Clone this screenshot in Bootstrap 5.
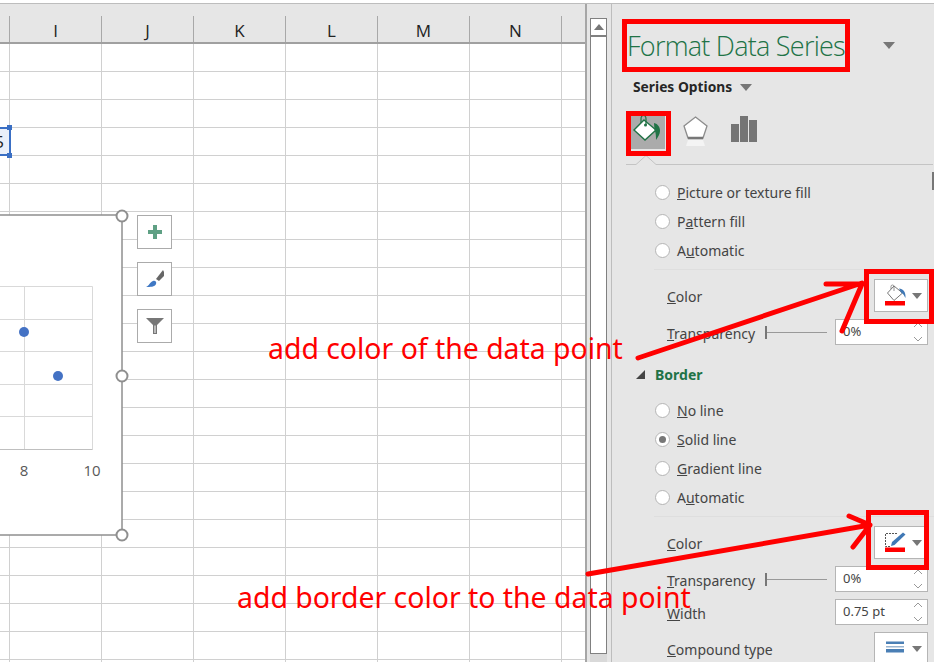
<!DOCTYPE html>
<html lang="en">
<head>
<meta charset="utf-8">
<title>Format Data Series</title>
<link rel="stylesheet" href="https://cdn.jsdelivr.net/npm/bootstrap@5.3.0/dist/css/bootstrap.min.css">
<style>
html,body{margin:0;height:662px;overflow:hidden;background:#fff}
body{font-family:"Noto Sans","Open Sans",sans-serif;color:#444}
.xl-app{position:relative;width:934px;height:662px;overflow:hidden}
.xl-topgap{height:3px;background:#fff}
.xl-main{height:659px;border-top:1px solid #bdbdbd;background:#e6e6e6}
.xl-sheet{width:587px;flex:none;border-right:2px solid #a6a6a6}
.xl-heads{height:40px;background:#e6e6e6;border-bottom:2px solid #a0a0a0}
.xl-col{width:92px;flex:none;margin-top:12px;border-right:1px solid #a8a8a8;text-align:center;font:17px/30px "Open Sans",sans-serif;color:#222}
.xl-col0{width:10px;flex:none;margin-top:12px;border-right:1px solid #a8a8a8}
.xl-grid{height:618px;background-color:#fff;background-image:linear-gradient(#d0d0d0 1px,transparent 1px),linear-gradient(90deg,#d0d0d0 1px,transparent 1px);background-size:92px 28px;background-position:9px 27px}
.xl-patch{position:absolute;left:231px;top:590px;width:354px;height:72px;background-color:#fff;background-image:linear-gradient(#d0d0d0 1px,transparent 1px),linear-gradient(90deg,#d0d0d0 1px,transparent 1px);background-size:92px 28px;background-position:54px 13px}
.xl-scroll{width:25px;flex:none;padding:14px 4px 0 3px;border-right:1px solid #bdbdbd}
.xl-up{height:19px;background:#fff;border:1px solid #808080;border-bottom-width:2px}
.xl-thumb{height:617px;background:#fff;border:1px solid #808080;border-top:0}
.xl-track{height:8px;background:#d9d9d9}
.xl-panel{flex:1;min-width:0}
.xl-title{height:51px;margin-top:16px;padding:0 39px 0 15px}
.xl-title span{font:300 27px/1 "Open Sans",sans-serif;letter-spacing:-.75px;color:#217346;white-space:nowrap}
.xl-caret{width:0;height:0;border-left:6px solid transparent;border-right:6px solid transparent;border-top:7px solid #777;flex:none}
.xl-btn .xl-caret{border-left-width:5px;border-right-width:5px;border-top-width:6px}
.xl-opts{height:28px;padding:4px 0 0 21px;font-weight:700;font-size:13.8px;color:#262626;gap:8px}
.xl-icons{height:35px;margin-top:15px;padding-left:18px}
.xl-active{width:35px;height:35px;background:#ababab;flex:none}
.xl-pent{margin-left:10px;margin-top:-1px}
.xl-bars{margin-left:13px;margin-top:-6px}
.xl-tabline{display:block;height:12px;width:321px;margin-top:6px}
.xl-r{height:29px;padding-left:43px;font-size:14px;gap:7px}
.xl-radio{width:15px;height:15px;border-radius:50%;background:#fff;border:1px solid #b5b5b5;flex:none;display:flex;align-items:center;justify-content:center}
.xl-radio i{width:7px;height:7px;border-radius:50%;background:#777}
.xl-rule{height:1px;background:#dedede;margin:4px 0 0 42px}
.xl-l{padding:0 6px 0 55px;font-size:14px}
.xl-color>span{padding-top:1px}
.xl-input>span:not(.xl-slider){padding-top:3px}
.xl-color{height:33px;margin-top:9px}
.xl-input{height:26px;margin-top:7px}
.xl-label{width:98px;flex:none;white-space:nowrap}
.xl-slider{width:62px;height:13px;flex:none;position:relative;border-left:2px solid #777}
.xl-slider::after{content:"";position:absolute;left:0;right:0;top:6px;height:1px;background:#999}
.xl-spin{width:93px;height:26px;flex:none;margin-left:auto;background:#fff;border:1px solid #b5b5b5;font-size:13px;padding:0 0 0 7px;color:#444}
.xl-spin svg{margin-left:auto;margin-right:4px;flex:none}
.btn.xl-btn{width:54px;height:33px;flex:none;margin-left:auto;padding:0 5px 0 9px;background:#fff;border:1px solid #b5b5b5;border-radius:0;gap:4px}
.xl-border{height:29px;margin-top:15px;padding-left:24px;gap:10px;font-size:14px;font-weight:700;color:#217346}
.xl-tri{width:0;height:0;border-left:9px solid transparent;border-bottom:9px solid #444;flex:none}
.xl-chart{position:absolute;left:0;top:205px;display:block}
.xl-chart text{font:15px "Open Sans",sans-serif;fill:#595959;text-anchor:middle}
.xl-tools{position:absolute;left:137px;top:215px;gap:13px}
.xl-tool{width:35px;height:34px;background:#fff;border:1px solid #ababab}
.xl-cell{position:absolute;left:-3px;top:127px;width:14px;height:29px;background:#e9eff9;border:2px solid #3a6fc4;font:17px/25px "Open Sans",sans-serif;color:#222;overflow:hidden;padding-right:5px}
.xl-cell span{flex:none}
.xl-h{position:absolute;left:7px;width:5px;height:5px;background:#3a6fc4}
.xl-note{position:absolute;color:#f00;font-size:28.4px;line-height:36px;white-space:nowrap}
.xl-n1{left:268px;top:330px}
.xl-n2{left:237px;top:579px}
.xl-box{position:absolute;border:5px solid #f00}
.xl-b1{left:622px;top:19px;width:228px;height:53px}
.xl-b2{left:626px;top:111px;width:45px;height:45px}
.xl-b3{left:864px;top:269px;width:70px;height:55px}
.xl-b4{left:866px;top:510px;width:63px;height:60px}
.xl-arrows{position:absolute;left:0;top:0;display:block}
.xl-edge{position:absolute;left:932px;top:172px;width:2px;height:18px;background:#777}
</style>
</head>
<body>
<div class="xl-app">
  <div class="xl-topgap"></div>
  <div class="xl-main d-flex">
    <div class="xl-sheet">
      <div class="xl-heads d-flex">
        <div class="xl-col0"></div>
        <div class="xl-col">I</div>
        <div class="xl-col">J</div>
        <div class="xl-col">K</div>
        <div class="xl-col">L</div>
        <div class="xl-col">M</div>
        <div class="xl-col">N</div>
      </div>
      <div class="xl-grid"></div>
    </div>
    <div class="xl-scroll">
      <div class="xl-up d-flex align-items-center justify-content-center"><svg width="10" height="6" viewBox="0 0 10 6"><path d="M5 0 10 6H0z" fill="#777"/></svg></div>
      <div class="xl-thumb"></div>
      <div class="xl-track"></div>
    </div>
    <div class="xl-panel">
      <div class="xl-title d-flex align-items-center justify-content-between"><span>Format Data Series</span><div class="xl-caret"></div></div>
      <div class="xl-opts d-flex align-items-center"><span>Series Options</span><div class="xl-caret"></div></div>
      <div class="xl-icons d-flex align-items-center">
        <div class="xl-active">
          <svg width="35" height="35" viewBox="0 0 35 35"><path d="M14 6 26 16 15 26 4 16Z" fill="#fff" stroke="#217346" stroke-width="1.4"/><path d="M11 9V5Q11 1.500 13.500 1.500 16 1.500 16 5V11" fill="none" stroke="#217346" stroke-width="1.2"/><circle cx="15.500" cy="11" r="1.500" fill="#217346"/><path d="M24 9C28 10 30 13 30 17 30 20 28 23 26 26 26 22 26 19 24.500 16Z" fill="#217346"/></svg>
        </div>
        <svg class="xl-pent" width="42" height="42" viewBox="0 0 42 42"><path d="M20.500 7 32 16 28 28H13L9 16Z" fill="#fff" stroke="#8c8c8c" stroke-width="1.300"/><path d="M13 28h15" stroke="#777" stroke-width="2.500"/><path d="M13 30 11 36H30L28 30Z" fill="#f4f4f4"/></svg>
        <svg class="xl-bars" width="28" height="28" viewBox="0 0 28 28"><path d="M1 9h8v18H1zM10 1h8v26h-8zM19 5h8v22h-8z" fill="#757575"/></svg>
      </div>
      <svg class="xl-tabline" viewBox="0 0 321 12"><path d="M14 9.500H24L34 .5 44 9.500H321" fill="none" stroke="#c4c4c4"/></svg>
      <div style="height:11px"></div>
      <div class="xl-r d-flex align-items-center"><span class="xl-radio"></span><span><u>P</u>icture or texture fill</span></div>
      <div class="xl-r d-flex align-items-center"><span class="xl-radio"></span><span>P<u>a</u>ttern fill</span></div>
      <div class="xl-r d-flex align-items-center"><span class="xl-radio"></span><span>A<u>u</u>tomatic</span></div>
      <div class="xl-rule"></div>
      <div class="xl-l xl-color d-flex align-items-center">
        <span><u>C</u>olor</span>
        <button class="btn xl-btn d-flex align-items-center" type="button">
          <svg width="24" height="24" viewBox="0 0 24 24"><path d="M10 2 18.500 9 10 16.500 3.500 9Z" fill="#fff" stroke="#777"/><path d="M7 5V2.500Q7 1 8.500 1T10 2.500V7" fill="none" stroke="#777" stroke-width=".8"/><path d="M15 4.500C19 4.500 22 8 21.500 14 20 12 20 10 17 8.500Z" fill="#3f78b5"/><rect x="1" y="17" width="20" height="4.500" fill="#f00"/></svg>
          <span class="xl-caret"></span>
        </button>
      </div>
      <div class="xl-l xl-input d-flex align-items-center">
        <span class="xl-label"><u>T</u>ransparency</span><span class="xl-slider"></span>
        <div class="xl-spin d-flex align-items-center"><span>0%</span><svg width="10" height="20" viewBox="0 0 10 20"><path d="M1 5 5 1 9 5M1 15 5 19 9 15" fill="none" stroke="#999"/></svg></div>
      </div>
      <div class="xl-border d-flex align-items-center"><span class="xl-tri"></span><span>Border</span></div>
      <div style="height:7px"></div>
      <div class="xl-r d-flex align-items-center"><span class="xl-radio"></span><span><u>N</u>o line</span></div>
      <div class="xl-r d-flex align-items-center"><span class="xl-radio"><i></i></span><span><u>S</u>olid line</span></div>
      <div class="xl-r d-flex align-items-center"><span class="xl-radio"></span><span><u>G</u>radient line</span></div>
      <div class="xl-r d-flex align-items-center"><span class="xl-radio"></span><span>A<u>u</u>tomatic</span></div>
      <div class="xl-rule"></div>
      <div class="xl-l xl-color d-flex align-items-center">
        <span><u>C</u>olor</span>
        <button class="btn xl-btn d-flex align-items-center" type="button">
          <svg width="24" height="24" viewBox="0 0 24 24"><path d="M13 2.500H1.500V15.500H6" fill="none" stroke="#555" stroke-dasharray="2 1"/><path d="M7 15 8 11 19 1.500 21.500 3.500 10.500 14Z" fill="#3f78b5"/><rect x="1" y="16.500" width="20" height="4.500" fill="#f00"/></svg>
          <span class="xl-caret"></span>
        </button>
      </div>
      <div class="xl-l xl-input d-flex align-items-center">
        <span class="xl-label"><u>T</u>ransparency</span><span class="xl-slider"></span>
        <div class="xl-spin d-flex align-items-center"><span>0%</span><svg width="10" height="20" viewBox="0 0 10 20"><path d="M1 5 5 1 9 5M1 15 5 19 9 15" fill="none" stroke="#999"/></svg></div>
      </div>
      <div class="xl-l xl-input d-flex align-items-center">
        <span class="xl-label"><u>W</u>idth</span>
        <div class="xl-spin d-flex align-items-center"><span>0.75 pt</span><svg width="10" height="20" viewBox="0 0 10 20"><path d="M1 5 5 1 9 5M1 15 5 19 9 15" fill="none" stroke="#999"/></svg></div>
      </div>
      <div class="xl-l xl-color d-flex align-items-center" style="margin-top:7px">
        <span><u>C</u>ompound type</span>
        <button class="btn xl-btn d-flex align-items-center" type="button">
          <svg width="24" height="24" viewBox="0 0 24 24"><path d="M2 4.500h18v2.500H2zM2 12h18v3.500H2z" fill="#4a7fb5"/><path d="M2 9h18v1.500H2z" fill="#9ab5d0"/></svg>
          <span class="xl-caret"></span>
        </button>
      </div>
    </div>
  </div>

  <div class="xl-patch"></div>

  <div class="xl-cell d-flex justify-content-end"><span>5</span></div>
  <div class="xl-h" style="top:125px"></div>
  <div class="xl-h" style="top:153px"></div>

  <svg class="xl-chart" width="132" height="342" viewBox="0 205 132 342">
    <rect x="-4" y="215" width="126" height="320" fill="#fff" stroke="#8f8f8f" stroke-width="1.500"/>
    <g stroke="#d9d9d9" fill="none">
      <path d="M0 286.500H92.500V449.500M24.500 286V449M0 319.500H92M0 351.500H92M0 384.500H92M0 416.500H92"/>
      <path d="M0 449.500H92.500" stroke="#bfbfbf"/>
    </g>
    <circle cx="24" cy="332" r="5" fill="#4472c4"/>
    <circle cx="58" cy="376" r="5" fill="#4472c4"/>
    <text x="24" y="476">8</text>
    <text x="92" y="476">10</text>
    <g fill="#fff" stroke="#8f8f8f" stroke-width="2">
      <circle cx="122" cy="216" r="5.500"/>
      <circle cx="122" cy="376" r="5.500"/>
      <circle cx="122" cy="535" r="5.500"/>
    </g>
  </svg>

  <div class="xl-tools d-flex flex-column">
    <div class="xl-tool d-flex align-items-center justify-content-center"><svg width="16" height="16" viewBox="0 0 16 16"><path d="M6 1h4v5h5v4h-5v5H6v-5H1V6h5z" fill="#5fa084"/></svg></div>
    <div class="xl-tool d-flex align-items-center justify-content-center"><svg width="20" height="20" viewBox="0 0 20 20"><path d="M11 10 18 1 19 3 19 7 14 12Z" fill="#666"/><path d="M1 18C4 17 5 13 8 12 10 11 12 13 11 15 10 18 5 18 1 18Z" fill="#3f78c4"/></svg></div>
    <div class="xl-tool d-flex align-items-center justify-content-center"><svg width="20" height="18" viewBox="0 0 20 18"><path d="M1 1H19L12 8V17H8V8Z" fill="#777"/><path d="M9.500 8.500V16H10.500V8.500Z" fill="#fff"/></svg></div>
  </div>

  <div class="xl-edge"></div>

  <div class="xl-note xl-n1">add color of the data point</div>
  <div class="xl-note xl-n2">add border color to the data point</div>

  <div class="xl-box xl-b1"></div>
  <div class="xl-box xl-b2"></div>
  <div class="xl-box xl-b3"></div>
  <div class="xl-box xl-b4"></div>

  <svg class="xl-arrows" width="934" height="662" viewBox="0 0 934 662">
    <g fill="none" stroke="#f00" stroke-width="5" stroke-linecap="round" stroke-linejoin="round">
      <path d="M638 358 862 283M826 284H862L842 331"/>
      <path d="M588 574 870 525M849 516 870 525 853 547"/>
    </g>
  </svg>
</div>
</body>
</html>
